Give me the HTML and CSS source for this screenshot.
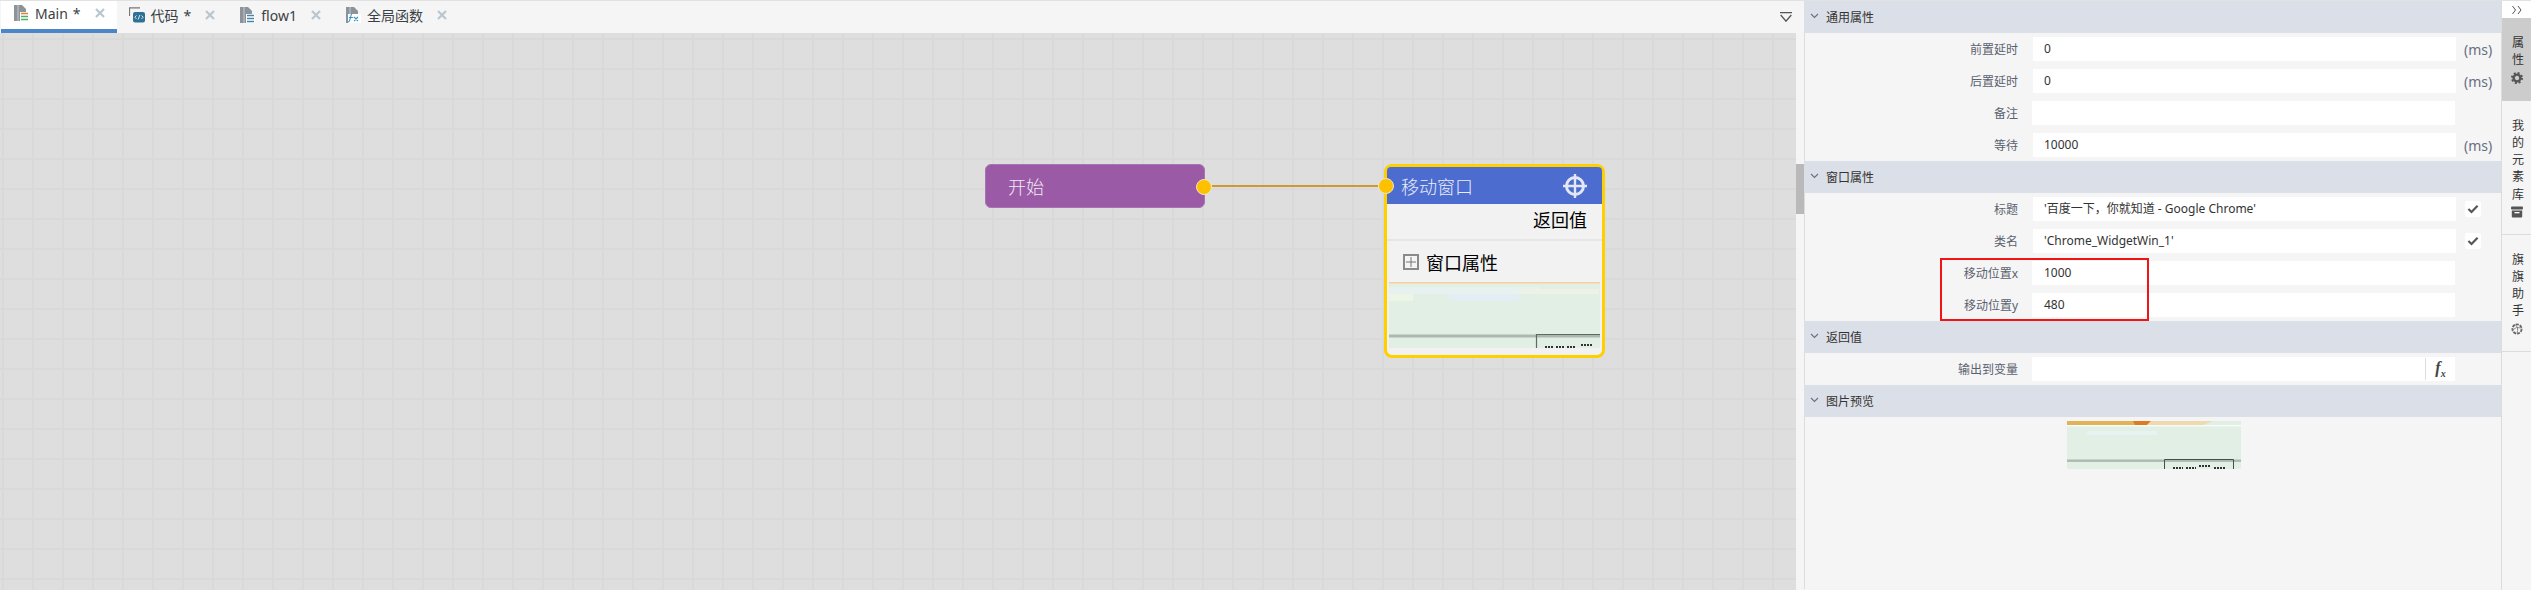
FILE: index.html
```html
<!DOCTYPE html>
<html lang="en">
<head>
    <meta charset="UTF-8">
    <meta name="viewport" content="width=device-width, initial-scale=1.0">
    <title>流程编辑器</title>
    <link rel="stylesheet" href="styles.css">
</head>
<body>
    <!-- Shared icons -->
    <svg class="icon-defs" aria-hidden="true">
        <symbol id="i-close" viewBox="0 0 10 10">
            <path d="M1 1L9 9M9 1L1 9" stroke="#b9c6ce" stroke-width="2.2" fill="none"/>
        </symbol>
        <symbol id="i-doc" viewBox="0 0 16 16">
            <path d="M1 0H9L13 4V16H1Z" fill="#8d9499"/>
            <path d="M5 0V16" stroke="#c4c8cb" stroke-width="1"/>
        </symbol>
        <symbol id="i-chevron" viewBox="0 0 9 6">
            <path d="M1 1L4.500 4.500L8 1" stroke="#6b7280" stroke-width="1.200" fill="none"/>
        </symbol>
        <symbol id="i-check" viewBox="0 0 14 12">
            <path d="M1.500 6L5.200 9.500L12.500 2" stroke="#555" stroke-width="2.600" fill="none"/>
        </symbol>
    </svg>

    <div class="top-line"></div>
    <div class="app">
        <!-- Editor side -->
        <main class="editor">
            <nav class="tabs">
                <div class="tab tab-active">
                    <svg class="tab-icon" viewBox="0 0 16 16">
                        <use href="#i-doc"/>
                        <rect x="7" y="7" width="9" height="9" fill="#fff"/>
                        <path d="M8 8.500H15" stroke="#d9822b" stroke-width="1.500"/>
                        <path d="M8 11.500H15M8 14.500H15" stroke="#4caf6a" stroke-width="1.500"/>
                    </svg>
                    <span>Main</span><span class="tab-star">*</span>
                    <svg class="tab-close"><use href="#i-close"/></svg>
                </div>
                <div class="tab">
                    <svg class="tab-icon" viewBox="0 0 16 16">
                        <path d="M.5 9V.8H11" stroke="#777" stroke-width="1.200" fill="none"/>
                        <rect x="4" y="5" width="12" height="10.500" rx="2" fill="#2f7196"/>
                        <path d="M7.500 8.500L5.800 10.200L7.500 12M12.500 8.500L14.200 10.200L12.500 12M10.800 8L9.200 12.500" stroke="#fff" stroke-width=".8" fill="none"/>
                    </svg>
                    <span>代码</span><span class="tab-star">*</span>
                    <svg class="tab-close"><use href="#i-close"/></svg>
                </div>
                <div class="tab">
                    <svg class="tab-icon" viewBox="0 0 16 16">
                        <use href="#i-doc"/>
                        <rect x="7" y="7" width="9" height="9" fill="#fff"/>
                        <path d="M8 8.500H15M8 11.500H15M8 14.500H15" stroke="#4a86a8" stroke-width="1.500"/>
                    </svg>
                    <span>flow1</span>
                    <svg class="tab-close"><use href="#i-close"/></svg>
                </div>
                <div class="tab">
                    <svg class="tab-icon" viewBox="0 0 16 16">
                        <use href="#i-doc"/>
                        <rect x="3" y="7" width="13" height="9" fill="#fff"/>
                        <path d="M7 7C5 7 6 15 3 15M4 10.500H8M9 10L13 14M13 10L9 14" stroke="#3a93c4" stroke-width="1.100" fill="none"/>
                    </svg>
                    <span>全局函数</span>
                    <svg class="tab-close"><use href="#i-close"/></svg>
                </div>
                <svg class="tabs-menu" viewBox="0 0 12 10">
                    <path d="M0 .6H12M.7 3L6 9.200L11.300 3" stroke="#555" stroke-width="1.300" fill="none"/>
                </svg>
            </nav>
            <div class="editor-body">
                <div class="canvas">
                    <div class="edge"></div>
                    <div class="node-start">
                        <span>开始</span>
                        <i class="port port-out"></i>
                    </div>
                    <div class="node-action">
                        <i class="port port-in"></i>
                        <div class="node-head">
                            <span>移动窗口</span>
                            <svg class="node-target" viewBox="0 0 24 24">
                                <circle cx="12" cy="12" r="8.500" stroke="#e4e8f6" stroke-width="3" fill="none"/>
                                <path d="M12 0V24M0 12H24" stroke="#e4e8f6" stroke-width="2.400"/>
                            </svg>
                        </div>
                        <div class="node-return">返回值</div>
                        <div class="node-group">
                            <svg class="node-plus" viewBox="0 0 16 16">
                                <rect x="1" y="1" width="14" height="14" fill="#f4f4f4" stroke="#8a8a8a" stroke-width="2"/>
                                <path d="M8 3V13M3 8H13" stroke="#777" stroke-width="1"/>
                            </svg>
                            <span>窗口属性</span>
                        </div>
                        <svg class="node-thumb" viewBox="0 0 211 66">
                            <rect width="211" height="66" fill="#e2efe5"/>
                            <rect width="211" height="1.500" fill="#f8cf9f"/>
                            <rect y="5" width="150" height="7" fill="#e6f1f0"/>
                            <rect x="60" y="12" width="70" height="7" fill="#e2eef3"/>
                            <rect x="130" y="7" width="80" height="5" fill="#eff0e6"/>
                            <rect x="0" y="12" width="24" height="7" fill="#ecf5e6"/>
                            <rect y="52.500" width="211" height="3" fill="#adb9b0"/>
                            <path d="M147.500 66V52.500H211" stroke="#5e6a62" stroke-width="1.200" fill="none"/>
                            <path d="M156 65H164M167 65H175M178 65H186M192 63H204" stroke="#333" stroke-width="2" stroke-dasharray="2 1" fill="none"/>
                        </svg>
                        <div class="node-foot"></div>
                    </div>
                </div>
                <div class="scrollbar"><div class="scrollbar-thumb"></div></div>
            </div>
        </main>

        <!-- Property panel -->
        <section class="panel">
            <h3 class="group-head"><svg class="chevron"><use href="#i-chevron"/></svg>通用属性</h3>
            <div class="group-body">
                <div class="row"><label>前置延时</label><div class="field">0</div><span class="unit">(ms)</span></div>
                <div class="row"><label>后置延时</label><div class="field">0</div><span class="unit">(ms)</span></div>
                <div class="row row-plain"><label>备注</label><div class="field"></div></div>
                <div class="row"><label>等待</label><div class="field">10000</div><span class="unit">(ms)</span></div>
            </div>
            <h3 class="group-head"><svg class="chevron"><use href="#i-chevron"/></svg>窗口属性</h3>
            <div class="group-body">
                <div class="row"><label>标题</label><div class="field">'百度一下，你就知道 - Google Chrome'</div><span class="check"><svg><use href="#i-check"/></svg></span></div>
                <div class="row"><label>类名</label><div class="field">'Chrome_WidgetWin_1'</div><span class="check"><svg><use href="#i-check"/></svg></span></div>
                <div class="row row-plain"><label>移动位置x</label><div class="field">1000</div></div>
                <div class="row row-plain"><label>移动位置y</label><div class="field">480</div></div>
            </div>
            <h3 class="group-head"><svg class="chevron"><use href="#i-chevron"/></svg>返回值</h3>
            <div class="group-body">
                <div class="row row-plain">
                    <label>输出到变量</label>
                    <div class="field field-fx"><em class="fx">f<sub>x</sub></em></div>
                </div>
            </div>
            <h3 class="group-head"><svg class="chevron"><use href="#i-chevron"/></svg>图片预览</h3>
            <div class="preview">
                <svg class="preview-img" viewBox="0 0 174 48">
                    <rect width="174" height="48" fill="#e2efe5"/>
                    <rect width="84" height="4" fill="#e3b257"/>
                    <path d="M66 0H84L80 4H68Z" fill="#dd7a22"/>
                    <path d="M84 0H146L136 4H80Z" fill="#f1d9ae"/>
                    <rect y="4" width="174" height="1.500" fill="#f5fafa"/>
                    <rect x="20" y="10" width="70" height="4" fill="#e6f3f3"/>
                    <rect y="38.500" width="174" height="2.400" fill="#adb9b0"/>
                    <path d="M97.500 48V38.500H166.500V48" stroke="#42504a" stroke-width="1" fill="none"/>
                    <path d="M106 47H116M119 47H129M132 45H143M147 47H158" stroke="#333" stroke-width="2" stroke-dasharray="2 1" fill="none"/>
                </svg>
            </div>
            <div class="red-mark"></div>
        </section>

        <!-- Right rail -->
        <aside class="rail">
            <div class="rail-toggle">
                <svg viewBox="0 0 12 10"><path d="M1.500 1L4.500 5L1.500 9M7 1L10 5L7 9" stroke="#555" stroke-width="1" fill="none"/></svg>
            </div>
            <div class="rail-tab rail-tab-active">
                <span>属性</span>
                <svg viewBox="0 0 12 12">
                    <circle cx="6" cy="6" r="3.400" stroke="#555" stroke-width="2.400" fill="none"/>
                    <circle cx="6" cy="6" r="5" stroke="#555" stroke-width="2" stroke-dasharray="2 1.930" fill="none"/>
                </svg>
            </div>
            <div class="rail-tab">
                <span>我的元素库</span>
                <svg viewBox="0 0 12 12">
                    <rect y=".5" width="12" height="3" rx="1" fill="#555"/>
                    <path d="M.8 4.500H11.200V10.500Q11.200 11.500 10.200 11.500H1.800Q.8 11.500 .8 10.500Z" fill="#555"/>
                    <rect x="3.500" y="6" width="5" height="1.300" fill="#fff"/>
                </svg>
            </div>
            <div class="rail-tab">
                <span>旗旗助手</span>
                <svg viewBox="0 0 12 12">
                    <circle cx="6" cy="6" r="4.600" stroke="#666" stroke-width="1.800" stroke-dasharray="3 1" fill="none"/>
                    <path d="M4 1.500Q8 4 6 10.500M1.500 7Q5 3 10.500 5" stroke="#888" stroke-width="1" fill="none"/>
                </svg>
            </div>
        </aside>
    </div>
</body>
</html>
```

FILE: styles.css
```css
/* Flow editor layout */
* {
    box-sizing: border-box;
}
html,
body {
    height: 100%;
}
body {
    margin: 0;
    overflow: hidden;
    background-color: #f5f5f5;
    color: #333;
    font-family: "Noto Sans", "Noto Sans CJK SC", sans-serif;
    font-size: 12px;
}
.icon-defs {
    display: none;
}
.top-line {
    height: 1px;
    background-color: #e2e2e2;
}
.app {
    display: flex;
    height: 589px;
}

/* Tabs */
.editor {
    display: flex;
    flex-direction: column;
    width: 1804px;
    flex: none;
}
.tabs {
    display: flex;
    align-items: stretch;
    height: 32px;
    padding-left: 1px;
    background-color: #f5f5f5;
    font-size: 14px;
    flex: none;
}
.tab {
    display: flex;
    align-items: center;
    height: 32px;
    padding: 0 12px 4px;
    color: #3a3f45;
}
.tab-active {
    background-color: #fff;
    border-bottom: 4px solid #4a86c8;
}
.tab-icon {
    width: 16px;
    height: 16px;
    margin-right: 6px;
}
.tab-star {
    margin-left: 5px;
}
.tab-close {
    width: 10px;
    height: 10px;
    margin-left: 14px;
}
.tabs-menu {
    width: 12px;
    height: 10px;
    margin: 11px 12px 0 auto;
}

/* Canvas */
.editor-body {
    display: flex;
    flex: 1;
}
.canvas {
    position: relative;
    flex: 1;
    background-color: #dedede;
    background-image:
        linear-gradient(#d9d9d9 2px, transparent 2px),
        linear-gradient(90deg, #d9d9d9 2px, transparent 2px);
    background-size: 30px 30px;
    background-position: 0 5px, 2px 0;
}
.scrollbar {
    width: 8px;
    background-color: #f5f5f5;
}
.scrollbar-thumb {
    width: 8px;
    height: 50px;
    margin-top: 131px;
    background-color: #b9b9b9;
}
.edge {
    position: absolute;
    left: 1212px;
    top: 152px;
    width: 166px;
    height: 2px;
    background-color: #cc9933;
}
.port {
    position: absolute;
    width: 16px;
    height: 16px;
    background-color: #ffc000;
    border: 1px solid #f1e6c4;
    border-radius: 50%;
}
.port-out {
    right: -8px;
    top: 14px;
}
.port-in {
    left: -9px;
    top: 11px;
    z-index: 1;
}
.node-start {
    position: absolute;
    left: 985px;
    top: 131px;
    display: flex;
    align-items: center;
    width: 220px;
    height: 44px;
    padding-left: 22px;
    background-color: #9a5aa5;
    border: 1px solid #a873b2;
    border-radius: 6px;
    color: #f2e8f4;
    font-size: 18px;
    font-weight: 300;
}
.node-action {
    position: absolute;
    left: 1384px;
    top: 131px;
    width: 221px;
    height: 194px;
    background-color: #f2f2f2;
    border: 3px solid #ffd000;
    border-radius: 8px;
    color: #000;
    font-size: 18px;
}
.node-head {
    display: flex;
    align-items: center;
    justify-content: space-between;
    height: 37px;
    padding: 0 15px 0 14px;
    background-color: #4c6ccf;
    border-radius: 4px 4px 0 0;
    color: #e9edf9;
    font-weight: 300;
}
.node-target {
    width: 24px;
    height: 24px;
}
.node-return {
    height: 37px;
    padding-right: 15px;
    border-bottom: 2px solid #e6e6e6;
    line-height: 33px;
    text-align: right;
}
.node-group {
    display: flex;
    align-items: center;
    gap: 7px;
    height: 41px;
    padding-left: 16px;
}
.node-plus {
    width: 16px;
    height: 16px;
}
.node-thumb {
    display: block;
    width: 211px;
    height: 66px;
    margin-left: 2px;
}

/* Property panel */
.panel {
    position: relative;
    width: 697px;
    flex: none;
    background-color: #f5f5f5;
}
.group-head {
    display: flex;
    align-items: center;
    height: 32px;
    margin: 0;
    padding-left: 6px;
    background-color: #dbdfe7;
    color: #333;
    font-size: 12px;
    font-weight: normal;
}
.chevron {
    width: 9px;
    height: 6px;
    margin-right: 7px;
    margin-bottom: 2px;
}
.group-body {
    display: flex;
    flex-direction: column;
    gap: 8px;
    padding: 4px 0;
    border-left: 1px solid #dcdcdc;
}
.row {
    display: flex;
    align-items: center;
    height: 24px;
    padding-right: 8px;
}
.row label {
    width: 213px;
    margin-right: 15px;
    color: #5a6270;
    text-align: right;
}
.row-plain label {
    margin-right: 14px;
}
.field {
    width: 423px;
    height: 24px;
    padding-left: 11px;
    background-color: #fff;
    color: #333;
    line-height: 24px;
}
.row-plain .field {
    padding-left: 12px;
}
.field-fx {
    display: flex;
    justify-content: flex-end;
}
.fx {
    width: 30px;
    margin: 1px 0;
    border-left: 1px solid #ddd;
    color: #444;
    font-family: "Liberation Serif", serif;
    font-size: 16px;
    font-weight: bold;
    line-height: 20px;
    text-align: center;
}
.fx sub {
    font-size: 10px;
    line-height: 0;
}
.unit {
    margin-left: 8px;
    color: #667080;
    font-size: 14px;
}
.check {
    display: flex;
    align-items: center;
    justify-content: center;
    width: 16px;
    height: 16px;
    margin-left: 9px;
    background-color: #fff;
    border-radius: 2px;
}
.check svg {
    width: 12px;
    height: 10px;
}
.preview {
    height: 172px;
    padding: 4px 0 0 262px;
    border-left: 1px solid #dcdcdc;
}
.preview-img {
    display: block;
    width: 174px;
    height: 48px;
}
.red-mark {
    position: absolute;
    left: 136px;
    top: 257px;
    width: 209px;
    height: 63px;
    border: 2px solid #f01414;
}

/* Right rail */
.rail {
    width: 30px;
    flex: none;
    background-color: #f5f5f5;
    border-left: 1px solid #dcdcdc;
    color: #333;
}
.rail-toggle {
    display: flex;
    align-items: center;
    justify-content: center;
    height: 17px;
    background-color: #fff;
}
.rail-toggle svg {
    width: 12px;
    height: 10px;
}
.rail-tab {
    display: flex;
    flex-direction: column;
    align-items: center;
    padding: 18px 0 16px;
    border-bottom: 1px solid #dcdcdc;
}
.rail-tab-active {
    background-color: #ccc;
    border-bottom-color: #ccc;
}
.rail-tab span {
    writing-mode: vertical-rl;
    letter-spacing: 5.300px;
    line-height: 14px;
}
.rail-tab svg {
    width: 12px;
    height: 12px;
    margin-top: 1px;
}
```
